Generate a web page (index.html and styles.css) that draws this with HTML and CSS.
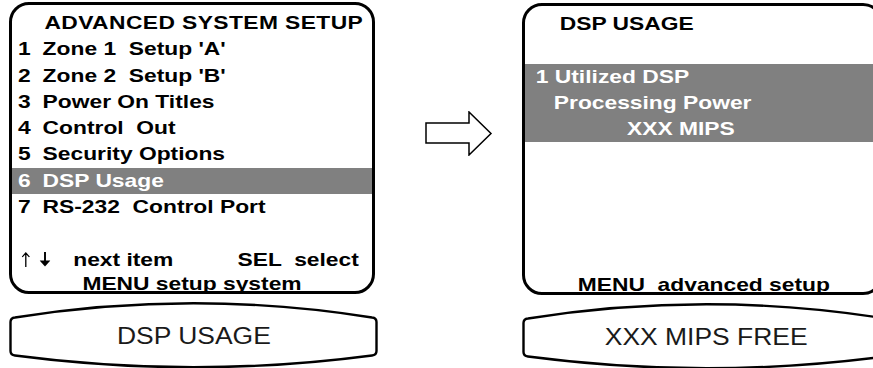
FILE: index.html
```html
<!DOCTYPE html>
<html lang="en">
<head>
    <meta charset="UTF-8">
    <title>DSP Usage</title>
    <link rel="stylesheet" href="styles.css">
</head>
<body>
<div class="page">
    <div class="col">
        <div class="panel">
            <div class="scr">
                <div class="ln title">ADVANCED SYSTEM SETUP</div>
                <div class="ln item"><span class="num">1</span>Zone 1  Setup 'A'</div>
                <div class="ln item"><span class="num">2</span>Zone 2  Setup 'B'</div>
                <div class="ln item"><span class="num">3</span>Power On Titles</div>
                <div class="ln item"><span class="num">4</span>Control  Out</div>
                <div class="ln item"><span class="num">5</span>Security Options</div>
                <div class="ln item hl"><span class="num">6</span>DSP Usage</div>
                <div class="ln item"><span class="num">7</span>RS-232  Control Port</div>
                <div class="ln"></div>
                <div class="ln keys">
                    <svg class="key-up" width="7" height="15" viewBox="0 0 7 15"><path d="M3.5 15V1M0.5 5L3.5 1L6.5 5" fill="none" stroke="#000" stroke-width="1.1"/></svg>
                    <svg class="key-down" width="9" height="15" viewBox="0 0 9 15"><path d="M4.5 0V9" stroke="#000" stroke-width="1.6"/><path d="M0 8.5H9L4.5 14.5Z" fill="#000"/></svg>
                    <span class="key-next">next item</span>
                    <span class="key-sel">SEL  select</span>
                </div>
                <div class="foot foot-center">MENU setup system</div>
            </div>
        </div>
        <div class="knob">
            <svg class="knob-shape" width="369" height="68" viewBox="0 0 369 68"><path d="M1.5 20Q1.5 16 6 15.5Q184.5 -13 363 15.5Q367.5 16 367.5 20V49Q367.5 53 363 53.5Q184.5 77 6 53.5Q1.5 53 1.5 49Z" fill="#fff" stroke="#000" stroke-width="2.4"/></svg>
            <span class="knob-text">DSP USAGE</span>
        </div>
    </div>

    <svg class="arrow" width="68" height="45" viewBox="0 0 68 45"><path d="M1 12H44V1L66 22.5L44 44V32H1Z" fill="#fff" stroke="#000" stroke-width="1.5" stroke-linejoin="miter"/></svg>

    <div class="col col-right">
        <div class="panel panel-r">
            <div class="scr">
                <div class="ln title-r">DSP USAGE</div>
                <div class="ln"></div>
                <div class="hl">
                    <div class="ln pad-1">1 Utilized DSP</div>
                    <div class="ln pad-2">Processing Power</div>
                    <div class="ln pad-3">XXX MIPS</div>
                </div>
                <div class="foot foot-r">MENU  advanced setup</div>
            </div>
        </div>
        <div class="knob">
            <svg class="knob-shape" width="369" height="68" viewBox="0 0 369 68"><path d="M1.5 20Q1.5 16 6 15.5Q184.5 -13 363 15.5Q367.5 16 367.5 20V49Q367.5 53 363 53.5Q184.5 77 6 53.5Q1.5 53 1.5 49Z" fill="#fff" stroke="#000" stroke-width="2.4"/></svg>
            <span class="knob-text">XXX MIPS FREE</span>
        </div>
    </div>
</div>
</body>
</html>
```

FILE: styles.css
```css
*{
    margin: 0;
    padding: 0;
}
html,body{
    width: 873px;
    height: 368px;
    overflow: hidden;
    background: #fff;
}
body{
    font-family: "Liberation Sans", Arial, sans-serif;
    color: #000;
}
.page{
    display: flex;
    align-items: flex-start;
    padding: 2px 0 0 9px;
}
.col{
    width: 369px;
    flex-shrink: 0;
}
.col-right{
    margin-top: 1px;
    margin-left: 29px;
}
.arrow{
    flex-shrink: 0;
    margin: 109px 0 0 47px;
}

/* lcd screen */
.panel{
    width: 366px;
    height: 292px;
    border: 3px solid #000;
    border-radius: 20px;
    box-sizing: border-box;
    overflow: hidden;
}
.panel-r{
    width: 361px;
}
.scr{
    width: 300px;
    height: 100%;
    padding-top: 5px;
    box-sizing: border-box;
    display: flex;
    flex-direction: column;
    transform: scaleX(1.2);
    transform-origin: 0 0;
    font-size: 19px;
    font-weight: bold;
}
.ln{
    height: 26.3px;
    line-height: 26.3px;
    white-space: pre;
}
.title{
    padding-left: 27px;
    letter-spacing: 0.35px;
}
.item{
    padding-left: 5px;
}
.num{
    display: inline-block;
    width: 20.5px;
}
.hl{
    background: #808080;
    color: #fff;
}
.keys{
    display: flex;
    align-items: center;
}
.key-up{
    margin-left: 8px;
}
.key-down{
    margin-left: 8px;
}
.key-next{
    margin-left: 19px;
}
.key-sel{
    margin-left: auto;
    margin-right: 11px;
}
.foot{
    margin-top: auto;
    line-height: 14px;
    white-space: pre;
}
.foot-center{
    text-align: center;
}
.title-r{
    padding-left: 29px;
}
.pad-1{
    padding-left: 9px;
}
.pad-2{
    padding-left: 24px;
}
.pad-3{
    padding-left: 85px;
}
.foot-r{
    padding-left: 44px;
}

/* knob label */
.knob{
    position: relative;
    height: 66px;
    margin-top: 8px;
    display: flex;
    align-items: center;
    justify-content: center;
}
.knob-shape{
    position: absolute;
    left: 0;
    top: 0;
}
.knob-text{
    position: relative;
    display: inline-block;
    font-size: 23px;
    color: #1a1a1a;
    transform: scaleX(1.15);
    margin-top: 2px;
}
```
